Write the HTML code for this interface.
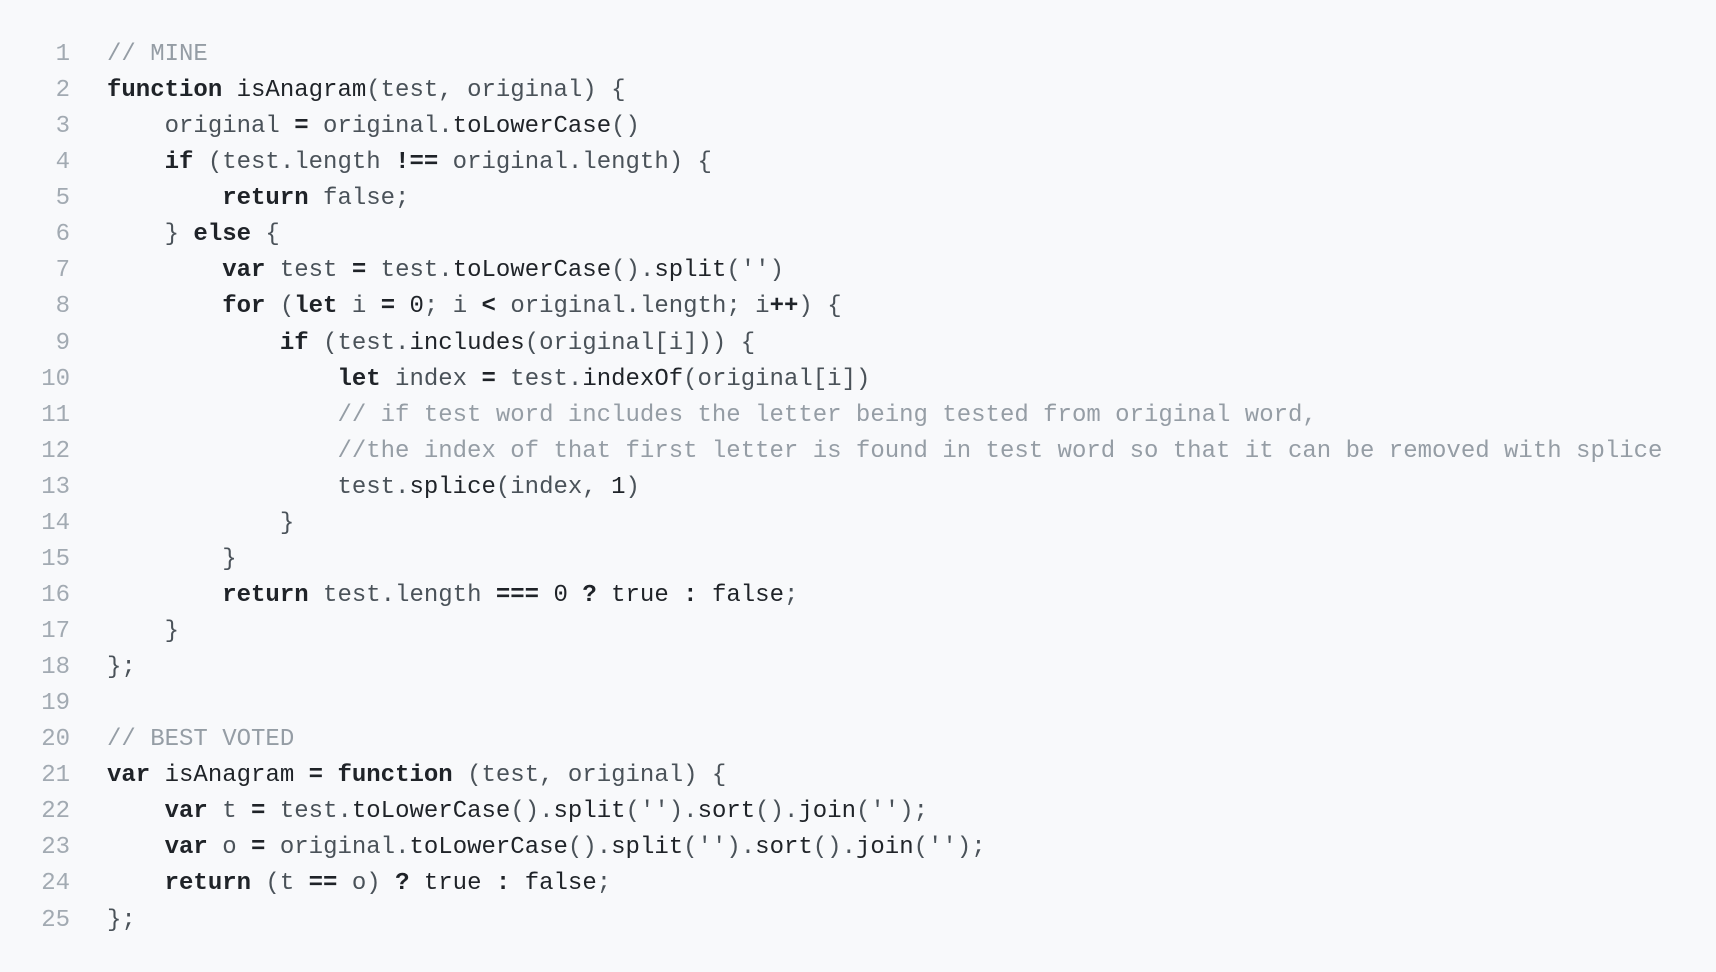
<!DOCTYPE html>
<html><head><style>
html,body{margin:0;padding:0;background:#f8f9fb;width:1716px;height:972px;overflow:hidden}
pre{margin:0;position:absolute;top:37px;left:0;font-family:"Liberation Mono",monospace;font-size:24px;line-height:36.06px;color:#4a5259}
.n{display:inline-block;width:70px;text-align:right;color:#a2aab2;margin-right:37px}
b{color:#1f2328;font-weight:bold}
.f{color:#1f2328}
.c{color:#959da5}
</style></head><body><pre>
<span class="n">1</span><span class="c">// MINE</span>
<span class="n">2</span><b>function</b> <span class="f">isAnagram</span>(test, original) {
<span class="n">3</span>    original <b>=</b> original.<span class="f">toLowerCase</span>()
<span class="n">4</span>    <b>if</b> (test.length <b>!==</b> original.length) {
<span class="n">5</span>        <b>return</b> false;
<span class="n">6</span>    } <b>else</b> {
<span class="n">7</span>        <b>var</b> test <b>=</b> test.<span class="f">toLowerCase</span>().<span class="f">split</span>('')
<span class="n">8</span>        <b>for</b> (<b>let</b> i <b>=</b> <span class="f">0</span>; i <b>&lt;</b> original.length; i<b>++</b>) {
<span class="n">9</span>            <b>if</b> (test.<span class="f">includes</span>(original[i])) {
<span class="n">10</span>                <b>let</b> index <b>=</b> test.<span class="f">indexOf</span>(original[i])
<span class="n">11</span>                <span class="c">// if test word includes the letter being tested from original word,</span>
<span class="n">12</span>                <span class="c">//the index of that first letter is found in test word so that it can be removed with splice</span>
<span class="n">13</span>                test.<span class="f">splice</span>(index, <span class="f">1</span>)
<span class="n">14</span>            }
<span class="n">15</span>        }
<span class="n">16</span>        <b>return</b> test.length <b>===</b> <span class="f">0</span> <b>?</b> <span class="f">true</span> <b>:</b> <span class="f">false</span>;
<span class="n">17</span>    }
<span class="n">18</span>};
<span class="n">19</span>
<span class="n">20</span><span class="c">// BEST VOTED</span>
<span class="n">21</span><b>var</b> <span class="f">isAnagram</span> <b>=</b> <b>function</b> (test, original) {
<span class="n">22</span>    <b>var</b> t <b>=</b> test.<span class="f">toLowerCase</span>().<span class="f">split</span>('').<span class="f">sort</span>().<span class="f">join</span>('');
<span class="n">23</span>    <b>var</b> o <b>=</b> original.<span class="f">toLowerCase</span>().<span class="f">split</span>('').<span class="f">sort</span>().<span class="f">join</span>('');
<span class="n">24</span>    <b>return</b> (t <b>==</b> o) <b>?</b> <span class="f">true</span> <b>:</b> <span class="f">false</span>;
<span class="n">25</span>};
</pre></body></html>
